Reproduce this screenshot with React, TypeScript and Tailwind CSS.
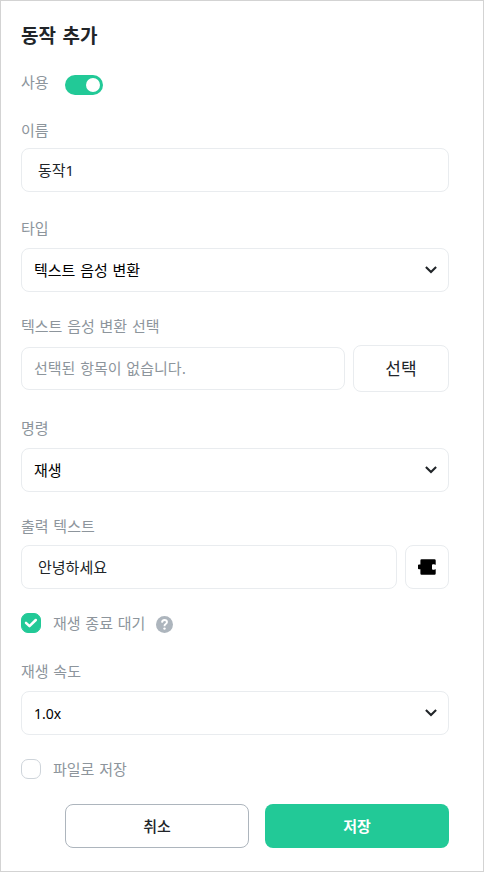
import { useState } from 'react';
import type { ReactNode } from 'react';

interface SelectProps {
  id: string;
  value: string;
  options: string[];
  numeric?: boolean;
  onChange: (value: string) => void;
}

interface CheckboxProps {
  id: string;
  checked: boolean;
  onChange: (checked: boolean) => void;
}

const Label = ({ htmlFor, children }: { htmlFor: string; children: ReactNode }) => (
  <label
    htmlFor={htmlFor}
    className="block font-['DejaVu_Sans','Noto_Sans_CJK_KR',sans-serif] text-[15px] leading-[22px] text-[#8d959c]"
  >
    {children}
  </label>
);

function Select({ id, value, options, numeric, onChange }: SelectProps) {
  return (
    <div className="relative">
      <select
        id={id}
        value={value}
        onChange={(e) => onChange(e.target.value)}
        className={`block h-11 w-full appearance-none rounded-lg border border-[#e9ecef] bg-white px-3 pt-0.5 text-black ${
          numeric
            ? 'text-sm'
            : "font-['DejaVu_Sans','Noto_Sans_CJK_KR',sans-serif] text-[15px]"
        }`}
      >
        {options.map((option) => (
          <option key={option} value={option}>
            {option}
          </option>
        ))}
      </select>
      <svg
        viewBox="0 0 12 8"
        className="pointer-events-none absolute top-[18px] right-3 h-2 w-3"
        fill="none"
        stroke="#212529"
        strokeWidth="2.1"
      >
        <path d="M.9 1l5.1 5 5.1-5" />
      </svg>
    </div>
  );
}

function Checkbox({ id, checked, onChange }: CheckboxProps) {
  return (
    <span className="relative block size-5">
      <input
        id={id}
        type="checkbox"
        checked={checked}
        onChange={(e) => onChange(e.target.checked)}
        className="block size-5 appearance-none rounded-[7px] border border-[#ced4da] bg-white checked:border-[#22c997] checked:bg-[#22c997]"
      />
      {checked && (
        <svg
          viewBox="0 0 20 20"
          className="pointer-events-none absolute inset-0 size-5"
          fill="none"
          stroke="white"
          strokeWidth="2.5"
          strokeLinecap="round"
          strokeLinejoin="round"
        >
          <path d="M5 9.8l3.5 3.4L14.8 7" />
        </svg>
      )}
    </span>
  );
}

export default function App() {
  const [enabled, setEnabled] = useState(true);
  const [name, setName] = useState('동작1');
  const [type, setType] = useState('텍스트 음성 변환');
  const [command, setCommand] = useState('재생');
  const [text, setText] = useState('안녕하세요');
  const [wait, setWait] = useState(true);
  const [speed, setSpeed] = useState('1.0x');
  const [saveFile, setSaveFile] = useState(false);

  return (
    <form
      onSubmit={(e) => e.preventDefault()}
      className="border border-[#d3d3d3] bg-white pt-5 pr-[34px] pb-[23px] pl-5 font-['Noto_Sans','Noto_Sans_CJK_KR',sans-serif] text-[15px] text-[#212529]"
    >
      <h1 className="font-['DejaVu_Sans','Noto_Sans_CJK_KR',sans-serif] text-[19px] leading-[30px] font-bold">
        동작 추가
      </h1>

      {/* 사용 */}
      <div className="mt-6 flex h-5 items-start gap-4">
        <div className="-mt-[3px]">
          <Label htmlFor="enabled">사용</Label>
        </div>
        <input
          id="enabled"
          type="checkbox"
          role="switch"
          checked={enabled}
          onChange={(e) => setEnabled(e.target.checked)}
          className="flex h-5 w-[38px] appearance-none items-center rounded-full bg-[#ced4da] px-[3px] before:size-3.5 before:rounded-full before:bg-white checked:justify-end checked:bg-[#22c997]"
        />
      </div>

      {/* 이름 */}
      <div className="mt-[25px] grid gap-1.5">
        <Label htmlFor="name">이름</Label>
        <input
          id="name"
          type="text"
          value={name}
          onChange={(e) => setName(e.target.value)}
          className="h-11 w-full rounded-lg border border-[#e9ecef] px-4 pb-0.5"
        />
      </div>

      {/* 타입 */}
      <div className="mt-[26px] grid gap-2">
        <Label htmlFor="type">타입</Label>
        <Select
          id="type"
          value={type}
          options={['텍스트 음성 변환']}
          onChange={setType}
        />
      </div>

      {/* 텍스트 음성 변환 선택 */}
      <div className="mt-6 grid gap-[7px]">
        <Label htmlFor="tts">텍스트 음성 변환 선택</Label>
        <div className="flex items-center gap-2">
          <input
            id="tts"
            type="text"
            readOnly
            placeholder="선택된 항목이 없습니다."
            className="h-[43px] min-w-0 flex-1 rounded-lg border border-[#e9ecef] px-3 font-['DejaVu_Sans','Noto_Sans_CJK_KR',sans-serif] placeholder:text-[#8d959c]"
          />
          <button
            type="button"
            className="h-[47px] w-24 rounded-lg border border-[#e9ecef] text-[17px]"
          >
            선택
          </button>
        </div>
      </div>

      {/* 명령 */}
      <div className="mt-[26px] grid gap-2">
        <Label htmlFor="command">명령</Label>
        <Select
          id="command"
          value={command}
          options={['재생', '정지']}
          onChange={setCommand}
        />
      </div>

      {/* 출력 텍스트 */}
      <div className="mt-6 grid gap-[7px]">
        <Label htmlFor="text">출력 텍스트</Label>
        <div className="flex gap-2">
          <input
            id="text"
            type="text"
            value={text}
            onChange={(e) => setText(e.target.value)}
            className="h-11 min-w-0 flex-1 rounded-lg border border-[#e9ecef] px-4 pb-0.5"
          />
          <button
            type="button"
            aria-label="블록 추가"
            className="flex size-11 items-center justify-center rounded-lg border border-[#e9ecef]"
          >
            <svg viewBox="0 0 18 16" className="h-4 w-[18px]">
              <path d="M3.5.3h13q1.2 0 1.2 1.2V5.8h-.8l-.5-.6H15q-1 0-1 1v3.6q0 1 1 1h1.4l.5-.6h.8v4.3q0 1.2-1.2 1.2h-13q-1.1 0-1.1-1.2V10.3H.8L0 9.8V6l.8-.6h1.6V1.5Q2.4.3 3.5.3z" />
            </svg>
          </button>
        </div>
      </div>

      {/* 재생 종료 대기 */}
      <div className="mt-6 flex h-5 items-center">
        <Checkbox id="wait" checked={wait} onChange={setWait} />
        <div className="mt-0.5 ml-3">
          <Label htmlFor="wait">재생 종료 대기</Label>
        </div>
        <button type="button" aria-label="도움말" className="mt-0.5 ml-[11px]">
          <svg viewBox="0 0 17 17" className="size-[17px]" fill="none">
            <circle cx="8.5" cy="8.5" r="8.5" fill="#adb5bd" />
            <path
              d="M6 6.6q.1-2.6 2.5-2.6t2.5 2.1q0 1.1-1.3 1.9T8.5 10.2"
              stroke="white"
              strokeWidth="1.9"
            />
            <circle cx="8.5" cy="12.6" r="1.2" fill="white" />
          </svg>
        </button>
      </div>

      {/* 재생 속도 */}
      <div className="mt-7 grid gap-2">
        <Label htmlFor="speed">재생 속도</Label>
        <Select
          id="speed"
          value={speed}
          options={['0.5x', '1.0x', '1.5x', '2.0x']}
          numeric
          onChange={setSpeed}
        />
      </div>

      {/* 파일로 저장 */}
      <div className="mt-6 flex h-5 items-center gap-3">
        <Checkbox id="save-file" checked={saveFile} onChange={setSaveFile} />
        <div className="mt-0.5">
          <Label htmlFor="save-file">파일로 저장</Label>
        </div>
      </div>

      {/* 버튼 */}
      <div className="mt-[25px] ml-11 grid grid-cols-2 gap-4">
        <button
          type="button"
          className="h-11 rounded-lg border border-[#adb5bd] font-medium"
        >
          취소
        </button>
        <button
          type="submit"
          className="h-11 rounded-lg bg-[#22c997] font-bold text-white"
        >
          저장
        </button>
      </div>
    </form>
  );
}
